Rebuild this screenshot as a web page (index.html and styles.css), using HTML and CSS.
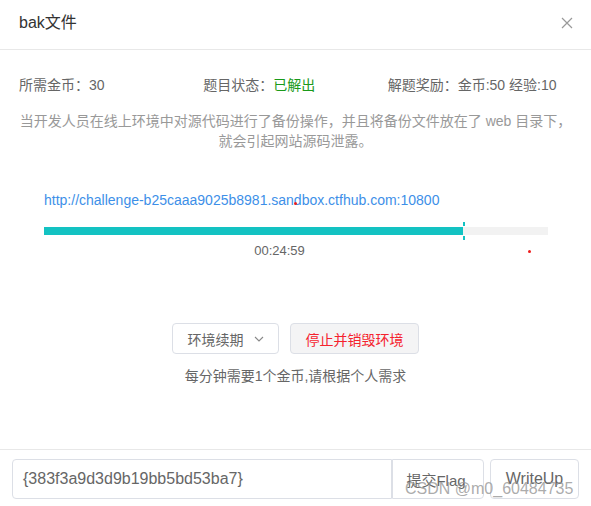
FILE: index.html
```html
<!DOCTYPE html>
<html lang="zh-CN">
<head>
<meta charset="utf-8">
<title>bak文件</title>
<link rel="stylesheet" href="styles.css">
</head>
<body>
<div class="dialog">
  <div class="header">
    <span class="title">bak文件</span>
    <svg class="close" width="12" height="12" viewBox="0 0 12 12"><path d="M1 1L11 11M11 1L1 11" stroke="#999" stroke-width="1.2" fill="none"/></svg>
  </div>
  <div class="body">
    <div class="info">
      <div>所需金币：30</div>
      <div>题目状态：<span class="solved">已解出</span></div>
      <div>解题奖励：金币:50 经验:10</div>
    </div>
    <p class="desc">当开发人员在线上环境中对源代码进行了备份操作，并且将备份文件放在了 web 目录下，<br>就会引起网站源码泄露。</p>
    <div class="env">
      <a class="url">http://challenge-b25caaa9025b8981.sandbox.ctfhub.com:10800</a>
      <div class="track">
        <div class="fill" style="width:83.2%"></div>
        <span class="tick tick-top" style="left:83.2%"></span>
        <span class="tick tick-bottom" style="left:83.2%"></span>
      </div>
      <div class="timer">00:24:59</div>
    </div>
    <div class="actions">
      <button class="btn renew">环境续期<svg width="10" height="6" viewBox="0 0 10 6"><path d="M1 1L5 5L9 1" stroke="#888" stroke-width="1.1" fill="none"/></svg></button>
      <button class="btn destroy">停止并销毁环境</button>
    </div>
    <div class="note">每分钟需要1个金币,请根据个人需求</div>
  </div>
  <div class="footer">
    <div class="flag-input">{383f3a9d3d9b19bb5bd53ba7}</div>
    <button class="btn submit">提交Flag</button>
    <button class="btn writeup">WriteUp</button>
    <span class="watermark">CSDN @m0_60484735</span>
  </div>
  <span class="dot dot-a"></span>
  <span class="dot dot-b"></span>
</div>
</body>
</html>
```

FILE: styles.css
```css
* { box-sizing: border-box; }
html, body { margin: 0; padding: 0; background: #fff; }
body {
  font-family: "Liberation Sans", "Noto Sans CJK SC", sans-serif;
  font-size: 14px;
  color: #666;
}
.dialog {
  position: relative;
  width: 591px;
  height: 506px;
  display: flex;
  flex-direction: column;
  overflow: hidden;
}
.header {
  height: 50px;
  padding: 0 18px 4px 19px;
  border-bottom: 1px solid #e8e8e8;
  display: flex;
  align-items: center;
  justify-content: space-between;
}
.title { font-size: 16px; color: #333; line-height: 20px; }
.close { display: block; }
.body { padding: 0 19px; }
.info {
  margin-top: 25px;
  display: grid;
  grid-template-columns: 1fr 1fr 1fr;
  line-height: 20px;
  color: #666;
}
.solved { color: #1a9a1a; }
.desc {
  margin: 16px 0 0;
  text-align: center;
  color: #999;
  line-height: 20px;
}
.env { padding: 0 24px 0 25px; }
.url {
  display: block;
  margin-top: 39px;
  line-height: 20px;
  color: #3d8fe8;
}
.track {
  position: relative;
  margin-top: 17px;
  height: 8px;
  background: #f2f2f2;
}
.fill { height: 100%; background: #13c2c2; }
.tick {
  position: absolute;
  width: 2px;
  height: 4px;
  background: #13c2c2;
}
.tick-top { top: -5px; }
.tick-bottom { top: 9px; }
.timer {
  margin-top: 7px;
  padding-right: 33px;
  text-align: center;
  font-size: 13px;
  line-height: 18px;
  color: #666;
}
.actions {
  margin-top: 63px;
  display: flex;
  justify-content: center;
  gap: 11px;
}
.btn {
  font-family: inherit;
  height: 31px;
  border: 1px solid #dcdfe6;
  border-radius: 4px;
  background: #fff;
  font-size: 14px;
  color: #666;
  padding: 0;
  cursor: pointer;
}
.renew {
  width: 107px;
  display: flex;
  align-items: center;
  justify-content: center;
  gap: 10px;
}
.destroy {
  width: 129px;
  background: #f4f4f5;
  color: #f5222d;
}
.note {
  margin-top: 12px;
  text-align: center;
  font-size: 14px;
  line-height: 20px;
  color: #666;
}
.footer {
  position: relative;
  margin-top: auto;
  border-top: 1px solid #e8e8e8;
  padding: 9px 12px 7px;
  display: flex;
  align-items: center;
}
.flag-input {
  width: 380px;
  height: 40px;
  border: 1px solid #dcdfe6;
  border-radius: 4px 0 0 4px;
  padding-left: 10px;
  display: flex;
  align-items: center;
  font-size: 16px;
  color: #666;
}
.submit {
  width: 92px;
  height: 40px;
  border-radius: 0 4px 4px 0;
  font-size: 15px;
  padding-right: 4px;
}
.writeup {
  width: 89px;
  height: 40px;
  margin-left: 6px;
  font-size: 16px;
}
.watermark {
  position: absolute;
  left: 405px;
  top: 30px;
  font-size: 16px;
  line-height: 18px;
  color: rgba(150, 150, 150, 0.8);
  white-space: nowrap;
  pointer-events: none;
}
.dot {
  position: absolute;
  width: 3px;
  height: 3px;
  border-radius: 50%;
  background: #ee1c1c;
}
.dot-a { left: 294px; top: 202px; }
.dot-b { left: 528px; top: 250px; }
```
